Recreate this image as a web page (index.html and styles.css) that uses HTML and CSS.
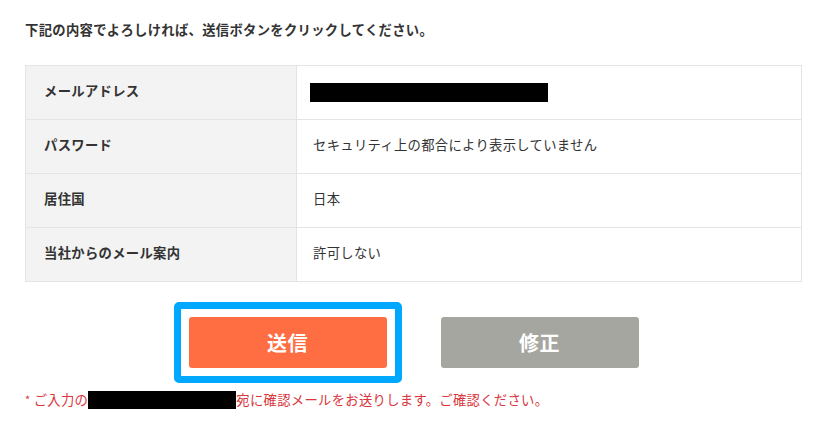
FILE: index.html
```html
<!DOCTYPE html>
<html lang="ja">
<head>
<meta charset="utf-8">
<title>確認</title>
<link rel="stylesheet" href="styles.css">
</head>
<body>
<div class="page">
  <p class="lead">下記の内容でよろしければ、送信ボタンをクリックしてください。</p>
  <div class="confirm-table">
    <div class="cell label">メールアドレス</div>
    <div class="cell value"><span class="redact redact-email"></span></div>
    <div class="cell label">パスワード</div>
    <div class="cell value">セキュリティ上の都合により表示していません</div>
    <div class="cell label">居住国</div>
    <div class="cell value">日本</div>
    <div class="cell label">当社からのメール案内</div>
    <div class="cell value">許可しない</div>
  </div>
  <div class="actions">
    <span class="focus-ring"><button class="btn btn-submit" type="button">送信</button></span>
    <button class="btn btn-edit" type="button">修正</button>
  </div>
  <p class="note"><span class="star">*</span> ご入力の<span class="redact redact-note"></span>宛に確認メールをお送りします。ご確認ください。</p>
</div>
</body>
</html>
```
FILE: styles.css
```css
html, body {
  margin: 0;
  padding: 0;
  background: #fff;
}
body {
  font-family: "Noto Sans CJK JP", "Noto Sans", sans-serif;
  font-size: 13.33px;
  letter-spacing: 0.3px;
  color: #333;
}
.page {
  padding: 20px 28px 0 25px;
}
.lead {
  margin: 0 0 25px;
  line-height: 20px;
  font-weight: bold;
  color: #333;
}
.confirm-table {
  display: grid;
  grid-template-columns: 271px 1fr;
  border-top: 1px solid #e4e4e4;
  border-left: 1px solid #e4e4e4;
}
.cell {
  box-sizing: border-box;
  height: 54px;
  padding-bottom: 4px;
  display: flex;
  align-items: center;
  border-right: 1px solid #e4e4e4;
  border-bottom: 1px solid #e4e4e4;
  line-height: 20px;
}
.label {
  background: #f3f3f3;
  font-weight: bold;
  padding-left: 18px;
}
.value {
  padding-left: 16px;
  color: #333;
}
.redact {
  display: inline-block;
  background: #000;
  vertical-align: middle;
}
.redact-email {
  width: 238px;
  height: 19px;
  margin-left: -3px;
  margin-top: 4px;
}
.actions {
  display: flex;
  justify-content: center;
  gap: 54px;
  margin-top: 35px;
}
.focus-ring {
  display: block;
  margin: -15px;
  padding: 8px;
  border: 7px solid #00a8ff;
  border-radius: 5px;
}
.btn {
  display: block;
  width: 198px;
  height: 51px;
  border: 0;
  border-radius: 3px;
  color: #fff;
  font-family: "Noto Sans CJK JP", "Noto Sans", sans-serif;
  font-size: 20px;
  font-weight: bold;
  letter-spacing: 0.5px;
  padding: 0;
}
.btn-submit {
  background: #ff6d42;
}
.btn-edit {
  background: #a6a6a0;
}
.note {
  margin: 21px 0 0;
  line-height: 20px;
  color: #d9363e;
}
.star {
  font-size: 11px;
  vertical-align: 1px;
}
.redact-note {
  width: 148px;
  height: 18px;
  vertical-align: -4px;
}
```
